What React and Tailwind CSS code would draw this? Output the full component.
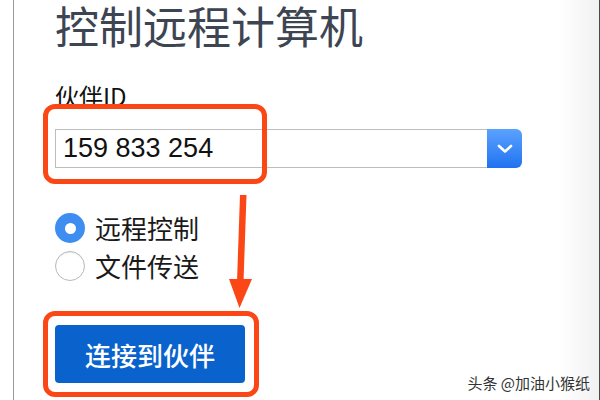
import React from 'react'

const cjk = { fontFamily: '"Noto Sans CJK SC", "Noto Sans", sans-serif' }

function Radio({ checked, label }) {
  return (
    <label className="flex items-center gap-[10px] h-[30px]">
      {checked ? (
        <span className="w-[30px] h-[30px] rounded-full bg-[#3d8ef0] flex items-center justify-center shrink-0">
          <span className="w-[11px] h-[11px] rounded-full bg-white" />
        </span>
      ) : (
        <span className="w-[30px] h-[30px] rounded-full bg-white border border-[#b9b9b9] shadow-[inset_0_1px_1px_rgba(0,0,0,0.08)] shrink-0" />
      )}
      <span className="text-[26px] leading-[30px] text-[#1a1a1a]">{label}</span>
    </label>
  )
}

export default function App() {
  return (
    <div className="relative w-[600px] h-[400px] flex bg-white overflow-hidden" style={cjk}>
      <div className="w-[13px] shrink-0" />
      <div className="w-px bg-[#9a9a9a] shrink-0" />

      <div className="flex-1 pl-[41px] pt-[2px] flex flex-col items-start">
        <h1 className="text-[44px] leading-[46px] text-[#3e4552] font-normal whitespace-nowrap">
          控制远程计算机
        </h1>

        <div className="mt-[36px] text-[24px] leading-[24px] text-[#111]">伙伴ID</div>

        <div className="mt-[21px] flex h-[39px] w-[467px]">
          <div className="flex-1 border border-[#bdbdbd] border-r-0 flex items-center pl-[7px]">
            <span
              className="text-[27px] leading-none text-[#111]"
              style={{ fontFamily: '"Liberation Sans", Arial, sans-serif' }}
            >
              159 833 254
            </span>
          </div>
          <button className="w-[35px] rounded-r-[6px] bg-gradient-to-b from-[#5aa2ff] to-[#1f72f0] flex items-center justify-center">
            <svg width="16" height="10" viewBox="0 0 16 10" fill="none">
              <path d="M2 2 L8 7.5 L14 2" stroke="white" strokeWidth="2.6" strokeLinecap="round" strokeLinejoin="round" />
            </svg>
          </button>
        </div>

        <div className="mt-[45px] flex flex-col gap-[8px]">
          <Radio checked label="远程控制" />
          <Radio label="文件传送" />
        </div>

        <button className="mt-[44px] w-[190px] h-[58px] rounded-[4px] bg-[#0a63cd] text-white text-[26px] font-medium">
          连接到伙伴
        </button>
      </div>

      <div className="w-[40px] shrink-0 bg-gradient-to-r from-white to-[#f1f1f1]" />
      <div className="w-px bg-[#4a4a4a] shrink-0" />

      {/* annotations */}
      <div className="absolute left-[43px] top-[104px] w-[224px] h-[80px] border-[5px] border-[#fb4715] rounded-[12px]" />
      <div className="absolute left-[43px] top-[311px] w-[216px] h-[86px] border-[5px] border-[#fb4715] rounded-[12px]" />
      <svg className="absolute left-0 top-0 pointer-events-none" width="600" height="400">
        <polygon points="240,195 246.5,195 243.5,282 237,282" fill="#fb4715" />
        <polygon points="229,279 252,279 239.5,308" fill="#fb4715" />
      </svg>

      <div
        className="absolute right-[10px] bottom-[10px] text-[15px] leading-none text-[#333]"
        style={{ textShadow: '0 0 2px #fff, 0 0 2px #fff' }}
      >
        头条 @加油小猴纸
      </div>
    </div>
  )
}
